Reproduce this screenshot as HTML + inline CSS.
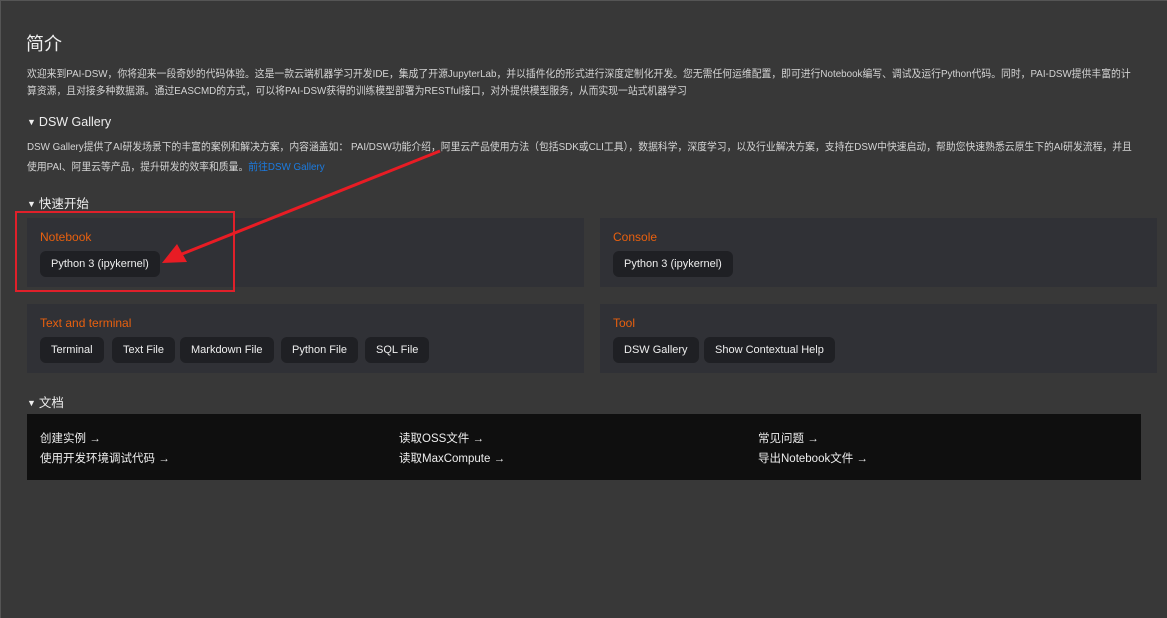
<!DOCTYPE html>
<html><head><meta charset="utf-8"><style>
body{margin:0;width:1167px;height:618px;background:#383838;font-family:"Liberation Sans","Noto Sans CJK SC",sans-serif;color:#ddd;position:relative;overflow:hidden}
.a{position:absolute;white-space:nowrap}
.p{font-size:10.5px;color:#d4d4d4;transform:scaleX(0.935);transform-origin:0 0}
.h{font-size:12.5px;color:#eee}
.h i{font-style:normal;font-size:9px;margin-right:3px;vertical-align:1px}
.card{position:absolute;background:#303136}
.card .t{position:absolute;left:13px;top:12px;font-size:12px;color:#e8600f}
.btn{position:absolute;top:33px;height:26px;line-height:26px;background:#1f2024;border-radius:6px;font-size:11px;color:#eee;padding:0 11px}
.doc{position:absolute;left:27px;top:414px;width:1114px;height:66px;background:#0f0f0f;font-size:11.5px;color:#eee}
</style></head><body>
<div style="position:absolute;left:0;top:0;width:1px;height:618px;background:#555"></div>
<div style="position:absolute;left:0;top:0;width:1167px;height:1px;background:#555"></div>
<div class="a" style="left:26px;top:30px;font-size:18px;color:#eee">简介</div>
<div class="a p" style="left:27px;top:66px">欢迎来到PAI-DSW，你将迎来一段奇妙的代码体验。这是一款云端机器学习开发IDE，集成了开源JupyterLab，并以插件化的形式进行深度定制化开发。您无需任何运维配置，即可进行Notebook编写、调试及运行Python代码。同时，PAI-DSW提供丰富的计</div>
<div class="a p" style="left:27px;top:83px">算资源，且对接多种数据源。通过EASCMD的方式，可以将PAI-DSW获得的训练模型部署为RESTful接口，对外提供模型服务，从而实现一站式机器学习</div>
<div class="a h" style="left:27px;top:115px"><i>▼</i>DSW Gallery</div>
<div class="a p" style="left:27px;top:139px">DSW Gallery提供了AI研发场景下的丰富的案例和解决方案，内容涵盖如： PAI/DSW功能介绍，阿里云产品使用方法（包括SDK或CLI工具），数据科学，深度学习，以及行业解决方案，支持在DSW中快速启动，帮助您快速熟悉云原生下的AI研发流程，并且</div>
<div class="a p" style="left:27px;top:159px">使用PAI、阿里云等产品，提升研发的效率和质量。<span style="color:#1b7be0">前往DSW Gallery</span></div>
<div class="a h" style="left:27px;top:193px"><i>▼</i>快速开始</div>
<div class="card" style="left:27px;top:218px;width:557px;height:69px"><div class="t">Notebook</div><div class="btn" style="left:13px">Python 3 (ipykernel)</div></div>
<div class="card" style="left:600px;top:218px;width:557px;height:69px"><div class="t">Console</div><div class="btn" style="left:13px">Python 3 (ipykernel)</div></div>
<div class="card" style="left:27px;top:304px;width:557px;height:69px"><div class="t">Text and terminal</div>
<div class="btn" style="left:13px;padding:0 11px">Terminal</div><div class="btn" style="left:85px;padding:0 11px">Text File</div><div class="btn" style="left:153px;padding:0 11px">Markdown File</div><div class="btn" style="left:254px;padding:0 11px">Python File</div><div class="btn" style="left:338px;padding:0 11px">SQL File</div></div>
<div class="card" style="left:600px;top:304px;width:557px;height:69px"><div class="t">Tool</div>
<div class="btn" style="left:13px;padding:0 11px">DSW Gallery</div><div class="btn" style="left:104px;padding:0 11px">Show Contextual Help</div></div>
<div class="a h" style="left:27px;top:392px"><i>▼</i>文档</div>
<div class="doc">
<div class="a" style="left:13px;top:16px">创建实例 →</div><div class="a" style="left:13px;top:36px">使用开发环境调试代码 →</div>
<div class="a" style="left:372px;top:16px">读取OSS文件 →</div><div class="a" style="left:372px;top:36px">读取MaxCompute →</div>
<div class="a" style="left:731px;top:16px">常见问题 →</div><div class="a" style="left:731px;top:36px">导出Notebook文件 →</div>
</div>
<div style="position:absolute;left:15px;top:211px;width:216px;height:77px;border:2px solid #e0202a"></div>
<svg style="position:absolute;left:0;top:0" width="1167" height="618"><line x1="440" y1="151" x2="182" y2="254" stroke="#e81c24" stroke-width="3"/><polygon points="162,263 177,244 187,262" fill="#e81c24"/></svg>
</body></html>
